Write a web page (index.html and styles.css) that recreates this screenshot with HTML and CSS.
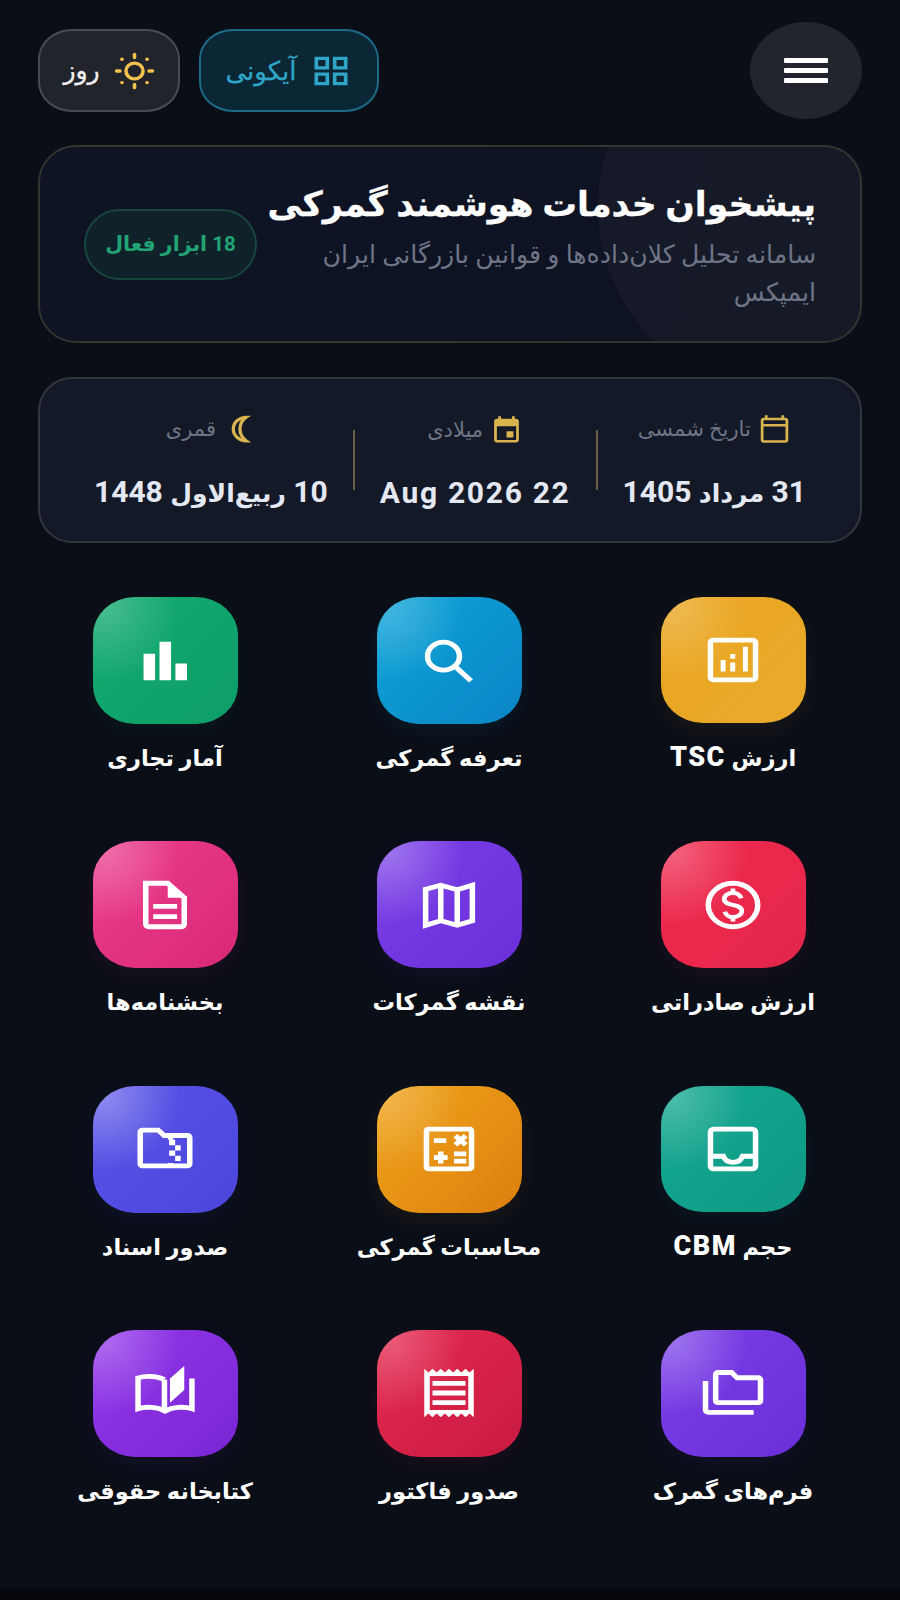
FILE: index.html
```html
<!DOCTYPE html>
<html lang="fa" dir="rtl">

<head>
    <meta charset="utf-8">
    <title>پیشخوان خدمات هوشمند گمرکی</title>
    <link rel="stylesheet" href="styles.css">
</head>

<body>
    <header class="topbar">
        <button class="menu-btn">
            <span></span>
            <span></span>
            <span></span>
        </button>
        <div class="actions">
            <div class="pill pill-view">
                <svg class="pill-icon" viewBox="0 0 24 24" preserveAspectRatio="none"><path d="M3 3v8h8V3H3zm6 6H5V5h4v4zm-6 4v8h8v-8H3zm6 6H5v-4h4v4zm4-16v8h8V3h-8zm6 6h-4V5h4v4zm-6 4v8h8v-8h-8zm6 6h-4v-4h4v4z"/></svg>
                <span>آیکونی</span>
            </div>
            <div class="pill pill-day">
                <svg class="sun-icon" viewBox="0 0 24 24" preserveAspectRatio="none"><circle cx="12" cy="12" r="5"/><path d="M12 1.500v2M12 20.500v2M1.500 12h2M20.500 12h2M4.600 4.600h.1M19.300 19.300h.1M19.300 4.600h.1M4.600 19.300h.1"/></svg>
                <span>روز</span>
            </div>
        </div>
    </header>

    <section class="hero">
        <div class="hero-text">
            <h1>پیشخوان خدمات هوشمند گمرکی</h1>
            <p>سامانه تحلیل کلان‌داده‌ها و قوانین بازرگانی ایران ایمپکس</p>
        </div>
        <div class="hero-badge">18 ابزار فعال</div>
    </section>

    <section class="dates">
        <div class="date-col">
            <div class="date-label">
                <svg class="date-icon" viewBox="0 0 24 24" preserveAspectRatio="none"><path d="M20 3h-1V1h-2v2H7V1H5v2H4c-1.100 0-2 .9-2 2v16c0 1.100.9 2 2 2h16c1.100 0 2-.9 2-2V5c0-1.100-.9-2-2-2zm0 18H4V10h16v11zm0-13H4V5h16v3z"/></svg>
                <span>تاریخ شمسی</span>
            </div>
            <div class="date-value">31 <span class="date-month">مرداد</span> 1405</div>
        </div>
        <div class="date-sep"></div>
        <div class="date-col">
            <div class="date-label">
                <svg class="date-icon" viewBox="0 0 24 24" preserveAspectRatio="none"><path d="M17 13h-5v5h5v-5zM16 1v2H8V1H6v2H5C3.900 3 3 3.900 3 5v15c0 1.100.9 2 2 2h14c1.100 0 2-.9 2-2V5c0-1.100-.9-2-2-2h-1V1h-2zm3 19H5V9h14v11z"/></svg>
                <span>میلادی</span>
            </div>
            <div class="date-value">22 Aug 2026</div>
        </div>
        <div class="date-sep"></div>
        <div class="date-col">
            <div class="date-label">
                <svg class="date-icon" viewBox="0 0 24 24" preserveAspectRatio="none"><path class="moon" d="M17 2.500A9.500 9.500 0 1 0 17 21.500A12 12 0 0 1 17 2.500z"/></svg>
                <span>قمری</span>
            </div>
            <div class="date-value">10 <span class="date-month">ربیع‌الاول</span> 1448</div>
        </div>
    </section>

    <main class="grid">
        <a class="tile">
            <div class="tile-box amber">
                <svg viewBox="0 0 24 24" preserveAspectRatio="none">
                    <rect class="line" x="3.800" y="3.800" width="16.400" height="16.400" rx="1"/>
                    <path d="M7.500 12h1.800v4.800H7.500zM11 9.500h1.800v2H11zM11 13h1.800v3.800H11zM15.600 6.500h1.800v10.300h-1.800z"/>
                </svg>
            </div>
            <span>ارزش <b class="latin">TSC</b></span>
        </a>
        <a class="tile">
            <div class="tile-box sky">
                <svg viewBox="0 0 24 24" preserveAspectRatio="none">
                    <circle class="line" cx="10" cy="10" r="5.800"/>
                    <path class="line" d="M14.300 14.300l5.700 5.900"/>
                </svg>
            </div>
            <span>تعرفه گمرکی</span>
        </a>
        <a class="tile">
            <div class="tile-box green">
                <svg viewBox="0 0 24 24" preserveAspectRatio="none"><path d="M4.200 9H8.400v11H4.200zM10 4h4.200v16H10zM15.800 13H20v7h-4.200z"/></svg>
            </div>
            <span>آمار تجاری</span>
        </a>

        <a class="tile">
            <div class="tile-box red">
                <svg viewBox="0 0 24 24" preserveAspectRatio="none">
                    <circle class="line" cx="12" cy="12" r="9"/>
                    <path class="line thin" d="M15 9.200c-.4-1.300-1.600-2.200-3-2.200-1.700 0-3.200 1-3.200 2.500 0 3.400 6.400 1.600 6.400 5 0 1.500-1.500 2.500-3.200 2.500-1.400 0-2.600-.9-3-2.200M12 5.200V7M12 17v1.800"/>
                </svg>
            </div>
            <span>ارزش صادراتی</span>
        </a>
        <a class="tile">
            <div class="tile-box violet">
                <svg viewBox="0 0 24 24" preserveAspectRatio="none"><path class="line" d="M3.500 5.500L9 3.800l6 1.900 5.500-1.900v14.700L15 20.400l-6-1.900-5.500 1.900zM9 3.800v14.700M15 5.700v14.700"/></svg>
            </div>
            <span>نقشه گمرکات</span>
        </a>
        <a class="tile">
            <div class="tile-box pink">
                <svg viewBox="0 0 24 24" preserveAspectRatio="none">
                    <path class="line" d="M5 3h8l6 6v11a1 1 0 0 1-1 1H6a1 1 0 0 1-1-1z"/>
                    <path d="M13 3v6h6zM7.700 11.600h8.700v2H7.700zM7.700 15.800h8.700v2H7.700z"/>
                </svg>
            </div>
            <span>بخشنامه‌ها</span>
        </a>

        <a class="tile">
            <div class="tile-box teal">
                <svg viewBox="0 0 24 24" preserveAspectRatio="none">
                    <rect class="line" x="3.800" y="3.800" width="16.400" height="16.400" rx="1.200"/>
                    <path class="line" d="M3.800 15h4.700c.5 1.500 1.800 2.500 3.500 2.500s3-1 3.500-2.500h4.700"/>
                </svg>
            </div>
            <span>حجم <b class="latin">CBM</b></span>
        </a>
        <a class="tile">
            <div class="tile-box orange">
                <svg viewBox="0 0 24 24" preserveAspectRatio="none">
                    <rect class="line" x="3.800" y="3.800" width="16.400" height="16.400" rx=".6"/>
                    <path class="line" d="M6.500 8.500h4.500M14.300 6.500l3.800 3.800M18.100 6.500l-3.800 3.800M6.500 15.500h5M9 13v5M13.800 14h4.500M13.800 17h4.500"/>
                </svg>
            </div>
            <span>محاسبات گمرکی</span>
        </a>
        <a class="tile">
            <div class="tile-box indigo">
                <svg viewBox="0 0 24 24" preserveAspectRatio="none">
                    <path class="line" d="M3 5a.8.8 0 0 1 .8-.8h5.700l2.200 2.200h8.500a.8.8 0 0 1 .8.800v11a.8.8 0 0 1-.8.800H3.800a.8.800 0 0 1-.8-.8zM14 6.400v1.800M14 17.800V19"/>
                    <path d="M13.500 8.200h2.200v2.200h-2.200zM15.700 10.400h2v2.200h-2zM13.500 12.600h2.200v2.200h-2.200zM15.700 14.800h2V17h-2z"/>
                </svg>
            </div>
            <span>صدور اسناد</span>
        </a>

        <a class="tile">
            <div class="tile-box violet">
                <svg viewBox="0 0 24 24" preserveAspectRatio="none">
                    <path class="line" d="M6.500 3.500h5l2 2.200h7.700a.8.8 0 0 1 .8.800v8.700a.8.8 0 0 1-.8.800H6.500a.8.8 0 0 1-.8-.8V4.300a.8.8 0 0 1 .8-.8zM2 7v12a1 1 0 0 0 1 1h16.500"/>
                </svg>
            </div>
            <span>فرم‌های گمرک</span>
        </a>
        <a class="tile">
            <div class="tile-box crimson">
                <svg viewBox="0 0 24 24" preserveAspectRatio="none"><path d="M19.500 3.500L18 2l-1.500 1.500L15 2l-1.500 1.500L12 2l-1.500 1.500L9 2 7.500 3.500 6 2 4.500 3.500 3 2v20l1.500-1.500L6 22l1.500-1.500L9 22l1.500-1.500L12 22l1.500-1.500L15 22l1.500-1.500L18 22l1.500-1.500L21 22V2l-1.500 1.500zM19 19H5V5h14v14zM6 15h12v2H6zm0-4h12v2H6zm0-4h12v2H6z"/></svg>
            </div>
            <span>صدور فاکتور</span>
        </a>
        <a class="tile">
            <div class="tile-box purple">
                <svg viewBox="0 0 24 24" preserveAspectRatio="none">
                    <path class="line" d="M11.800 6.500C9.500 5 5 4.700 2.200 5.800v12.700c2.800-1 7-.8 9.800 1 2.800-1.800 7-2 9.800-1V6"/>
                    <path class="line" d="M11.800 6.500V19"/>
                    <path d="M19 .8l-5.200 5.200V16l5.200-5.200z"/>
                </svg>
            </div>
            <span>کتابخانه حقوقی</span>
        </a>
    </main>

    <footer class="bottom-band"></footer>
</body>

</html>
```

FILE: styles.css
```css
* {
    box-sizing: border-box;
}

html,
body {
    margin: 0;
    height: 1600px;
}

body {
    display: flex;
    flex-direction: column;
    padding: 22px 38px 0;
    background-color: #0a0e17;
    color: #ffffff;
    font-family: Roboto, "DejaVu Sans", sans-serif;
    overflow: hidden;
}

/* top bar */
.topbar {
    display: flex;
    justify-content: space-between;
    align-items: center;
}

.menu-btn {
    display: flex;
    flex-direction: column;
    justify-content: center;
    align-items: center;
    gap: 5px;
    width: 112px;
    height: 97px;
    border: none;
    border-radius: 50%;
    background-color: #22252e;
}

.menu-btn span {
    width: 44px;
    height: 5px;
    background-color: #ffffff;
    border-radius: 1px;
}

.actions {
    display: flex;
    gap: 19px;
}

.pill {
    display: flex;
    justify-content: center;
    align-items: center;
    gap: 12px;
    height: 83px;
    border-radius: 34px / 30px;
    font-size: 26px;
    -webkit-text-stroke: 0.3px currentColor;
}

.pill-icon {
    width: 44px;
    height: 38px;
    fill: currentColor;
}

.pill-view {
    width: 180px;
    background-color: #0b2634;
    border: 2px solid #1c6a86;
    color: #2fa5c8;
}

.pill-day {
    width: 142px;
    gap: 14px;
    background-color: #22242c;
    border: 2px solid #484b53;
    color: #f0f0f0;
    font-size: 25px;
}

.sun-icon {
    width: 41px;
    height: 38px;
    fill: none;
    stroke: #f2c14e;
    stroke-width: 2.1;
    stroke-linecap: round;
}

/* hero card */
.hero {
    position: relative;
    display: flex;
    justify-content: space-between;
    align-items: center;
    gap: 10px;
    height: 198px;
    margin-top: 26px;
    padding: 0 44px;
    overflow: hidden;
    background: linear-gradient(100deg, #0f1425, #0e1322);
    border: 2px solid #34352f;
    border-radius: 38px;
}

.hero::before {
    content: "";
    position: absolute;
    top: -150px;
    right: -218px;
    width: 480px;
    height: 420px;
    border-radius: 50%;
    background-color: rgba(255, 240, 210, 0.036);
}

.hero-text {
    position: relative;
    flex: 1;
    min-width: 0;
    margin-top: 6px;
}

.hero h1 {
    margin: 0;
    font-size: 34.7px;
    line-height: 44px;
    font-weight: 700;
    white-space: nowrap;
    -webkit-text-stroke: 0.3px #ffffff;
}

.hero p {
    margin: 10px 0 0;
    font-size: 25.2px;
    line-height: 38px;
    color: #6f7586;
}

.hero-badge {
    position: relative;
    display: flex;
    justify-content: center;
    align-items: center;
    flex-shrink: 0;
    width: 173px;
    height: 71px;
    background-color: #0f2229;
    border: 2px solid #17463f;
    border-radius: 36px;
    color: #22a374;
    font-size: 20.5px;
    font-weight: 700;
}

/* date strip */
.dates {
    display: flex;
    justify-content: center;
    align-items: center;
    height: 166px;
    margin-top: 34px;
    background-color: #141927;
    border: 2px solid #33363c;
    border-radius: 34px;
}

.date-col {
    display: flex;
    flex-direction: column;
    align-items: center;
    gap: 31px;
    padding: 4px 25px 0;
    white-space: nowrap;
}

.date-sep {
    flex-shrink: 0;
    width: 2px;
    height: 60px;
    background-color: #6b5f3f;
}

.date-label {
    display: flex;
    align-items: center;
    gap: 7px;
    height: 30px;
    color: #6f7586;
    font-size: 21px;
}

.date-icon {
    width: 33px;
    height: 30px;
    fill: #d9b34e;
}

.date-icon .moon {
    fill: none;
    stroke: #d9b34e;
    stroke-width: 2.4;
}

.date-value {
    color: #e4e8f2;
    font-size: 30px;
    line-height: 34px;
    font-weight: 700;
    letter-spacing: 1.7px;
}

.date-month {
    font-size: 25px;
    letter-spacing: 1px;
}

/* tool grid */
.grid {
    flex: 1;
    display: grid;
    grid-template-columns: repeat(3, 1fr);
    grid-auto-rows: 177px;
    column-gap: 28px;
    row-gap: 67.3px;
    margin: 54px 1px 0 -1px;
}

.tile {
    display: flex;
    flex-direction: column;
    align-items: center;
    gap: 18px;
    font-size: 22.5px;
    line-height: 32px;
    font-weight: 700;
    white-space: nowrap;
}

.latin {
    font-size: 27px;
    letter-spacing: 1.5px;
}

.tile-box {
    display: flex;
    justify-content: center;
    align-items: center;
    width: 145px;
    height: 128px;
    border-radius: 42px / 38px;
}

.tile-box svg {
    width: 66px;
    height: 58px;
    fill: #ffffff;
}

.tile-box .line {
    fill: none;
    stroke: #ffffff;
    stroke-width: 2;
}

.tile-box .thin {
    stroke-width: 1.7;
}

.amber {
    background: radial-gradient(circle at 8% 8%, rgba(255, 255, 255, 0.22), transparent 42%), linear-gradient(135deg, #eba51f, #e8aa2c);
    box-shadow: 0 8px 26px rgba(235, 165, 31, 0.07);
}

.sky {
    background: radial-gradient(circle at 8% 8%, rgba(255, 255, 255, 0.22), transparent 42%), linear-gradient(135deg, #0ea5d9, #0a84c4);
    box-shadow: 0 8px 26px rgba(14, 165, 217, 0.07);
}

.green {
    background: radial-gradient(circle at 8% 8%, rgba(255, 255, 255, 0.22), transparent 42%), linear-gradient(135deg, #12ab6f, #0e9e68);
    box-shadow: 0 8px 26px rgba(18, 171, 111, 0.06);
}

.red {
    background: radial-gradient(circle at 8% 8%, rgba(255, 255, 255, 0.26), transparent 42%), linear-gradient(135deg, #f02a4e, #e3264a);
    box-shadow: 0 8px 26px rgba(240, 42, 78, 0.07);
}

.violet {
    background: radial-gradient(circle at 8% 8%, rgba(255, 255, 255, 0.28), transparent 42%), linear-gradient(135deg, #7b3fe8, #6a2fd8);
    box-shadow: 0 8px 26px rgba(123, 63, 232, 0.07);
}

.pink {
    background: radial-gradient(circle at 8% 8%, rgba(255, 255, 255, 0.26), transparent 42%), linear-gradient(135deg, #ec3d8d, #da2878);
    box-shadow: 0 8px 26px rgba(236, 61, 141, 0.07);
}

.teal {
    background: radial-gradient(circle at 8% 8%, rgba(255, 255, 255, 0.24), transparent 42%), linear-gradient(135deg, #14a892, #0f9a85);
    box-shadow: 0 8px 26px rgba(20, 168, 146, 0.06);
}

.orange {
    background: radial-gradient(circle at 8% 8%, rgba(255, 255, 255, 0.22), transparent 42%), linear-gradient(135deg, #f0a41a, #dc7f0e);
    box-shadow: 0 8px 26px rgba(240, 164, 26, 0.07);
}

.indigo {
    background: radial-gradient(circle at 8% 8%, rgba(255, 255, 255, 0.32), transparent 42%), linear-gradient(135deg, #5a54e8, #4c45dc);
    box-shadow: 0 8px 26px rgba(90, 84, 232, 0.07);
}

.crimson {
    background: radial-gradient(circle at 8% 8%, rgba(255, 255, 255, 0.24), transparent 42%), linear-gradient(135deg, #e52a50, #c91a40);
    box-shadow: 0 8px 26px rgba(229, 42, 80, 0.07);
}

.purple {
    background: radial-gradient(circle at 8% 8%, rgba(255, 255, 255, 0.26), transparent 42%), linear-gradient(135deg, #9337ea, #7a26d4);
    box-shadow: 0 8px 26px rgba(147, 55, 234, 0.07);
}

/* strip at the very bottom */
.bottom-band {
    flex-shrink: 0;
    height: 12px;
    margin: 0 -38px;
    background-color: #05070c;
}
```
